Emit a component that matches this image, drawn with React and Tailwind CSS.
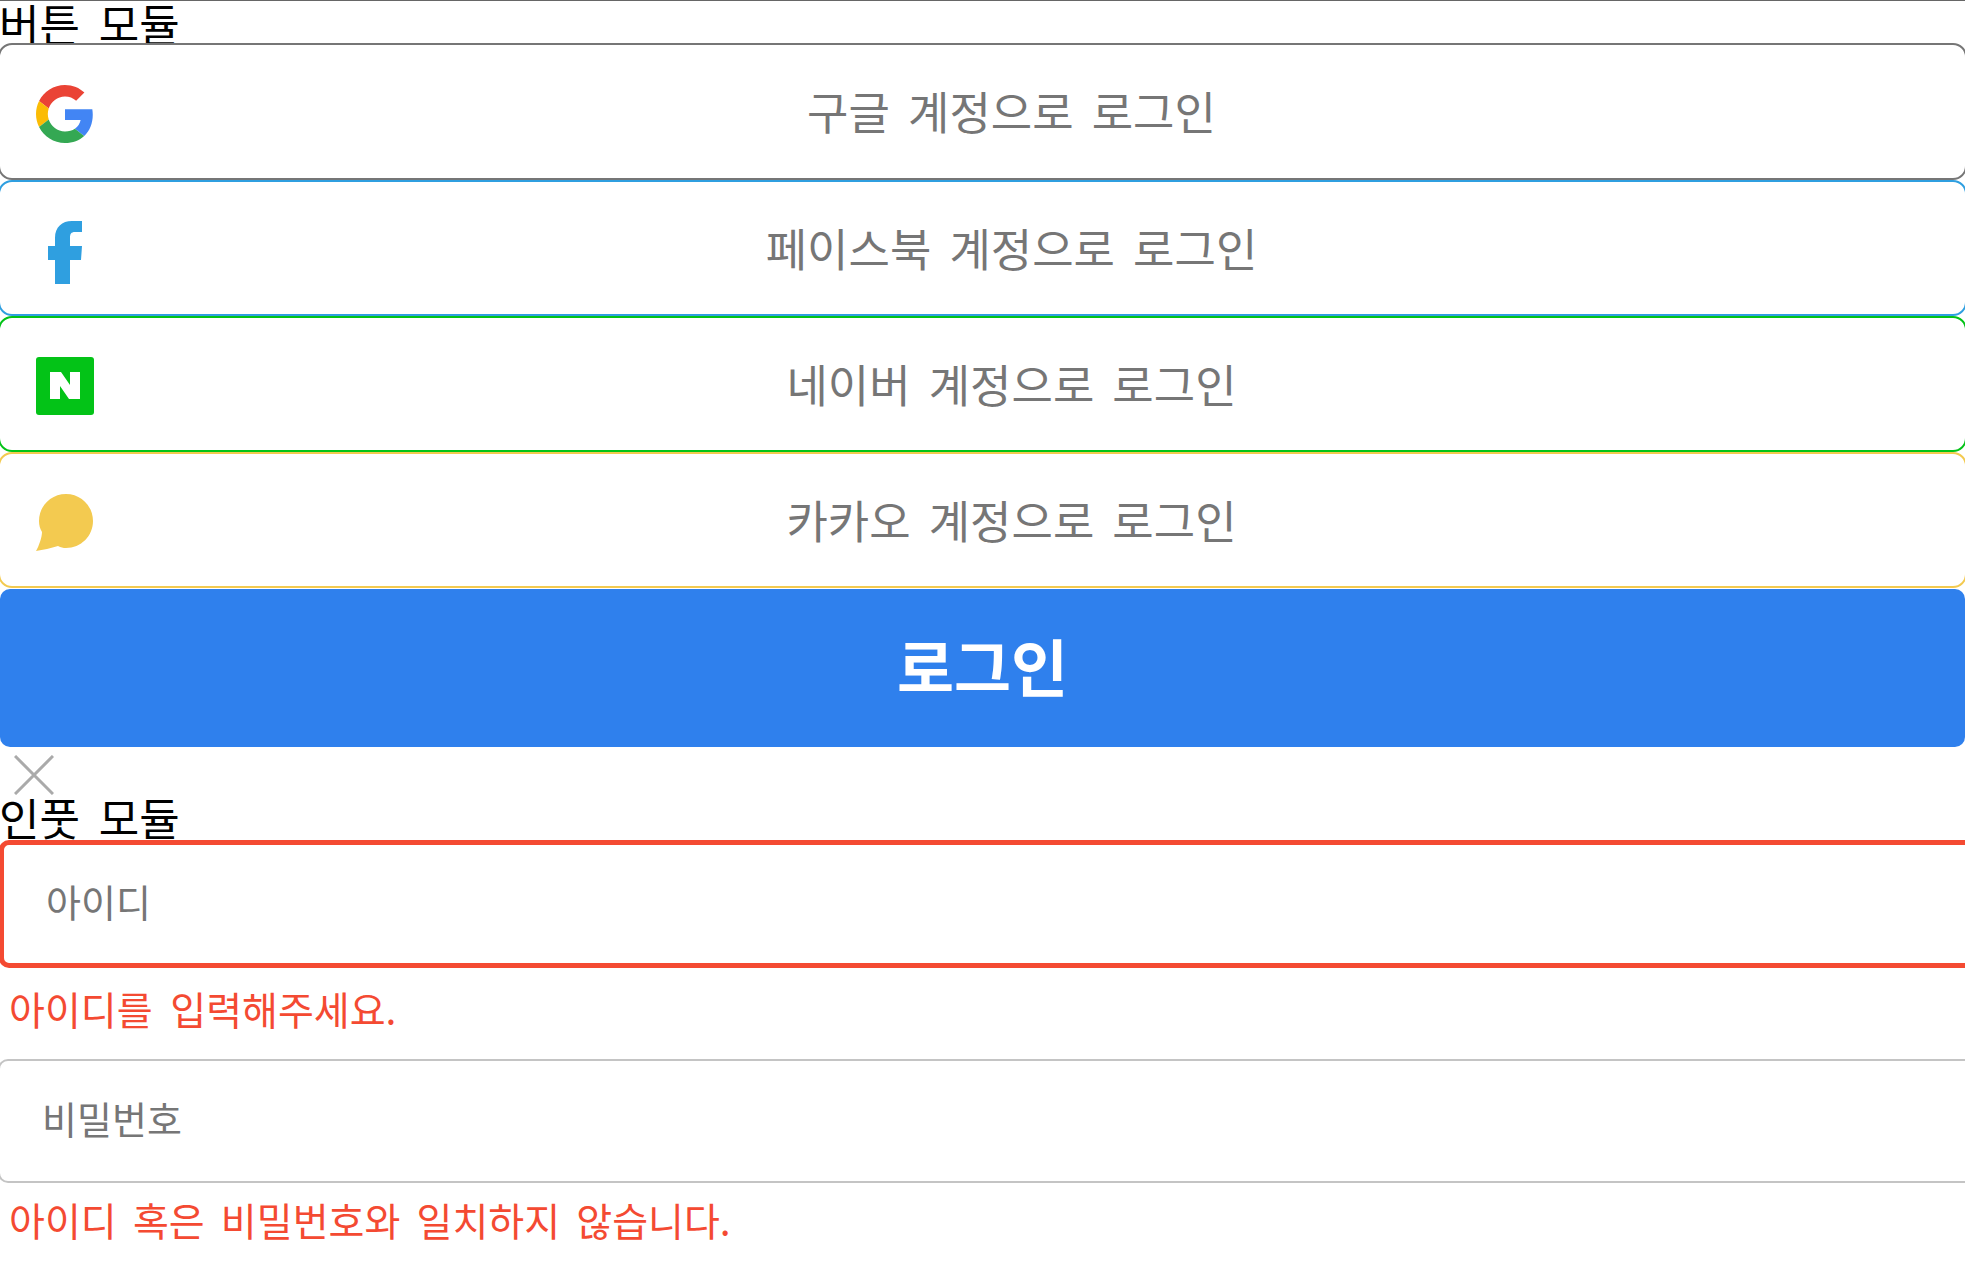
import React from "react";

function GoogleIcon() {
  return (
    <svg viewBox="0 0 48 48" className="w-[58px] h-[58px] blur-[0.5px]">
      <path fill="#EA4335" d="M24 9.500c3.540 0 6.710 1.220 9.210 3.600l6.850-6.850C35.900 2.380 30.470 0 24 0 14.620 0 6.510 5.380 2.560 13.220l7.980 6.190C12.430 13.720 17.740 9.500 24 9.500z" />
      <path fill="#4285F4" d="M46.980 24.550c0-1.570-.15-3.090-.38-4.550H24v9.020h12.940c-.58 2.960-2.260 5.480-4.780 7.180l7.730 6c4.510-4.180 7.090-10.360 7.090-17.650z" />
      <path fill="#FBBC05" d="M10.530 28.590c-.48-1.450-.76-2.990-.76-4.590s.27-3.140.76-4.590l-7.980-6.190C.92 16.460 0 20.120 0 24c0 3.880.92 7.540 2.560 10.780l7.970-6.190z" />
      <path fill="#34A853" d="M24 48c6.480 0 11.930-2.130 15.890-5.810l-7.730-6c-2.150 1.450-4.920 2.300-8.160 2.300-6.260 0-11.570-4.220-13.470-9.910l-7.980 6.190C6.510 42.620 14.620 48 24 48z" />
    </svg>
  );
}

function FacebookIcon() {
  return (
    <svg viewBox="0 0 58 58" className="w-[58px] h-[58px] overflow-visible blur-[0.5px]">
      <path fill="#2f9fe0" d="M19 63V39H12V25h7V17C19 6 26 0 36 0h10v11h-7c-4 0-5 2-5 6v8h12l-1 14H34v24z" />
    </svg>
  );
}

function NaverIcon() {
  return (
    <svg viewBox="0 0 58 58" className="w-[58px] h-[58px] blur-[0.4px]">
      <rect width="58" height="58" rx="3" fill="#03c317" />
      <path fill="#fff" d="M14 15h11l9 13V15h10v27H33l-9-13v13H14z" />
    </svg>
  );
}

function KakaoIcon() {
  return (
    <svg viewBox="0 0 58 58" className="w-[58px] h-[58px] overflow-visible blur-[0.5px]">
      <path fill="#f3ca50" d="M30 0C45 0 57 12 57 27 57 42 45 54 30 54 27 54 25 53.500 22 52 15 54 7 56 0 57 3 52 6 43 6 38 4 35 3 31 3 27 3 12 15 0 30 0z" />
    </svg>
  );
}

function SocialButton({ label, border, icon }) {
  return (
    <button className={`flex items-center w-full h-[136.25px] px-[36px] bg-white rounded-[14px] border-2 ${border}`}>
      <span className="w-[58px] h-[58px] shrink-0 mt-[5px]">{icon}</span>
      <span className="flex-1 text-center text-[45px] leading-[60px] [word-spacing:8px] text-[#767676]">{label}</span>
    </button>
  );
}

export default function App() {
  return (
    <div className="bg-white min-h-screen overflow-x-hidden border-t border-[#666] font-['Noto_Sans_CJK_KR',sans-serif]">
      <h2 className="text-[44px] leading-[44px] h-[42.25px] font-normal [word-spacing:9px] text-black -ml-px">버튼 모듈</h2>

      {/* Social login buttons */}
      <div className="flex flex-col -mx-[2px]">
        <SocialButton label="구글 계정으로 로그인" border="border-[#767676]" icon={<GoogleIcon />} />
        <SocialButton label="페이스북 계정으로 로그인" border="border-[#2f9fe0]" icon={<FacebookIcon />} />
        <SocialButton label="네이버 계정으로 로그인" border="border-[#03c317]" icon={<NaverIcon />} />
        <SocialButton label="카카오 계정으로 로그인" border="border-[#f3ca50]" icon={<KakaoIcon />} />
      </div>

      <button className="block w-full mt-[0.5px] h-[158px] bg-[#2f80ed] rounded-[10px] text-white text-[62px] leading-[80px] pb-[6px] font-bold">
        로그인
      </button>

      <svg viewBox="0 0 40 40" className="ml-[14px] mt-[8px] w-[40px] h-[40px] block blur-[0.4px]">
        <path d="M1 1L39 39M39 1L1 39" stroke="#aaa" strokeWidth="3" />
      </svg>

      <h2 className="text-[44px] leading-[44px] h-[45px] font-normal [word-spacing:9px] text-black -ml-px">인풋 모듈</h2>

      {/* Input module */}
      <div className="w-[calc(100%+60px)] -ml-px h-[128px] flex items-center px-[42px] pb-[6px] rounded-[10px] border-[5px] border-[#f44a32] text-[38px] text-[#767676]">
        아이디
      </div>
      <p className="text-[39px] [word-spacing:9px] text-[#f44a32] ml-[9px] h-[91px] pt-[15px] leading-[50px]">아이디를 입력해주세요.</p>

      <div className="w-[calc(100%+60px)] -ml-[2px] h-[124px] flex items-center px-[42px] pb-[6px] rounded-[10px] border-2 border-[#c4c4c4] text-[38px] text-[#767676]">
        비밀번호
      </div>
      <p className="text-[39px] [word-spacing:7.500px] text-[#f44a32] ml-[9px] pt-[11px] leading-[50px]">아이디 혹은 비밀번호와 일치하지 않습니다.</p>
    </div>
  );
}
